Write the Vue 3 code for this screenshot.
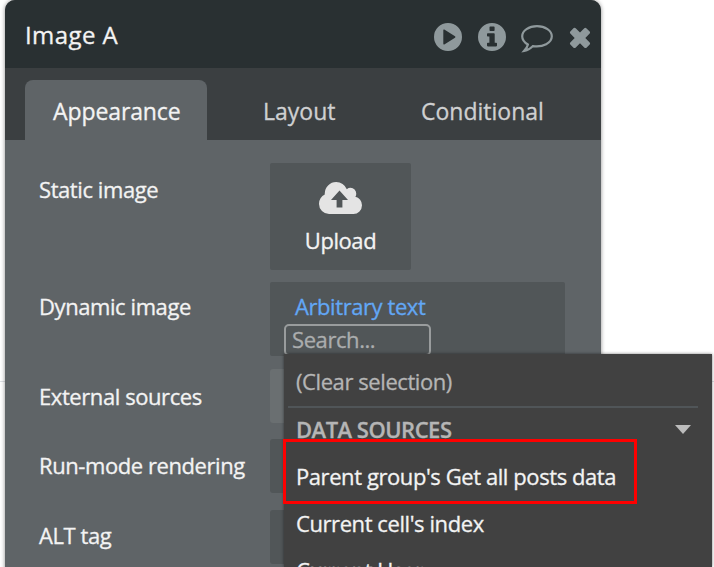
<script setup>
const tabs = [
  { name: 'Appearance', key: 'appearance', active: true },
  { name: 'Layout', key: 'layout' },
  { name: 'Conditional', key: 'conditional' }
]
const fields = [
  { label: 'External sources', key: 'external' },
  { label: 'Run-mode rendering', key: 'rendering' },
  { label: 'ALT tag', key: 'alt' }
]
</script>

<template>
  <main class="canvas">
    <section class="panel">
      <header class="title-bar">
        <h1>Image A</h1>
        <div class="actions">
          <svg class="play" viewBox="0 0 28 28"><path fill-rule="evenodd" d="M14 0a14 14 0 1 0 0 28a14 14 0 0 0 0-28ZM9.3 7.2q0-1.1 1-.6L21 13.2q1 .8 0 1.6L10.3 21.4q-1 .4-1-.6Z" /></svg>
          <svg class="info" viewBox="0 0 28 28"><path fill-rule="evenodd" d="M14 0a14 14 0 1 0 0 28a14 14 0 0 0 0-28ZM11.500 4.200q0-.8.8-.8h3.500q.8 0 .8.8v3q0 .8-.8.8h-3.500q-.8 0-.8-.8ZM9.800 10.200h6.100q.8 0 .8.8v8.800h1.500q.8 0 .8.8v2q0 .8-.8.8h-8.400q-.8 0-.8-.8v-2q0-.8.8-.8h1.600v-6.300H9.800q-.8 0-.8-.8V11q0-.8.8-.8Z" /></svg>
          <svg class="comment" viewBox="0 0 32 28"><path d="M16 1.200C7.800 1.200 1.200 5.600 1.200 11.300c0 3.500 2.200 6.300 5.700 8.200c-.4 2.600-1.900 4.300-3.700 6.300c3.500-.6 6.300-2 8.600-4.700c10.300 1.500 19-3.200 19-9.800C30.800 5.600 24.200 1.200 16 1.200Z" /></svg>
          <svg class="close" viewBox="0 0 22 22"><path d="M4.700 1Q5.700 .2 6.700 1.200L11 5.500L15.300 1.200Q16.300 .2 17.300 1.200L20.700 4.600Q21.500 5.500 20.700 6.400L16.300 11L20.700 15.500Q21.600 16.500 20.700 17.500L17.500 20.700Q16.500 21.500 15.500 20.700L11 16.300L6.500 20.700Q5.500 21.500 4.500 20.700L1.300 17.500Q.4 16.500 1.300 15.500L5.700 11L1.300 6.500Q.4 5.500 1.300 4.500Z" /></svg>
        </div>
      </header>
      <nav class="tabs">
        <div v-for="t in tabs" :key="t.key" class="tab" :class="[t.key, { active: t.active }]"><span>{{ t.name }}</span></div>
      </nav>
      <div class="form">
        <div class="row static">
          <label>Static image</label>
          <button class="upload">
            <svg viewBox="0 0 43 32">
              <g transform="translate(1.433 -2.909) scale(.022396 .022727)"><path class="cloud" d="M1856 1152q0 159-112.500 271.500t-271.500 112.500h-1088q-185 0-316.500-131.500t-131.500-316.500q0-130 70-240t188-165q-2-30-2-43 0-212 150-362t362-150q156 0 285.500 87t188.500 231q71-62 166-62 106 0 181 75t75 181q0 76-41 138 130 31 213.500 135.500t83.500 238.500z" /></g>
              <path class="arrow" d="M20.500 8.500L29 18h-5.600v7.500h-5.800V18H12Z" />
            </svg>
            <span>Upload</span>
          </button>
        </div>
        <div class="row dynamic">
          <label>Dynamic image</label>
          <div class="expression">
            <span class="expr-text">Arbitrary text</span>
            <div class="search"><span>Search...</span></div>
          </div>
        </div>
        <div v-for="f in fields" :key="f.key" class="row plain" :class="f.key">
          <label>{{ f.label }}</label>
          <div class="input"></div>
        </div>
      </div>
    </section>

    <aside class="menu">
      <div class="clear"><span>(Clear selection)</span></div>
      <div class="group"><span>DATA SOURCES</span><svg viewBox="0 0 16 9"><path d="M0 0H16L8 9Z" /></svg></div>
      <div class="option parent"><span>Parent group's Get all posts data</span></div>
      <div class="option cell"><span>Current cell's index</span></div>
      <div class="option user"><span>Current User</span></div>
    </aside>
    <div class="highlight"></div>
  </main>
</template>

<style>
body { margin: 0; background: #fff; overflow: hidden; }
</style>

<style scoped>
* { box-sizing: border-box; }
.canvas {
  position: relative;
  width: 714px;
  height: 567px;
  padding-left: 5px;
  overflow: hidden;
  font-family: "Open Sans", sans-serif;
  font-size: 22px;
  line-height: 30px;
  letter-spacing: -.42px;
  -webkit-text-stroke: .3px;
  color: #f3f3f3;
  white-space: nowrap;
  background: linear-gradient(#dfe1e5, #dfe1e5) 0 381px / 100% 1px no-repeat #fff;
}
.panel {
  width: 596px;
  height: 580px;
  overflow: hidden;
  border-radius: 10px 10px 0 0;
  background: #5f6467;
  box-shadow: 0 0 4px rgba(0, 0, 0, .45);
}
.title-bar {
  display: flex;
  justify-content: space-between;
  height: 68px;
  padding: 19px 10px 0 20px;
  background: #293032;
}
h1 { margin: 0; font-size: 24px; font-weight: 400; line-height: 32px; letter-spacing: .4px; }
.actions { display: flex; align-items: flex-start; fill: #8f999c; }
.play, .info { width: 28px; height: 28px; margin: 4px 16px 0 0; }
.play { margin-right: 16px; }
.info { margin-right: 15px; }
.comment { width: 32px; height: 28px; margin: 6px 16px 0 0; fill: none; stroke: #8f999c; stroke-width: 2.2; }
.close { width: 22px; height: 22px; margin-top: 8px; }
.tabs { display: flex; align-items: flex-end; height: 72px; padding-left: 20px; background: #3b3f41; color: #cfd0d1; font-size: 23px; letter-spacing: 0; }
.tab { height: 60px; padding-top: 16px; }
.appearance { width: 182px; padding-left: 28px; border-radius: 8px 8px 0 0; letter-spacing: -.1px; }
.active { background: #5f6467; color: #f3f3f3; }
.layout { padding-left: 56px; width: 214px; }
.form { padding: 23px 36px 0 34px; }
.row { display: grid; grid-template-columns: 231px 1fr; }
.static { height: 119px; }
.static label { padding-top: 11px; }
.upload {
  display: flex;
  flex-direction: column;
  align-items: center;
  width: 141px;
  height: 107px;
  padding: 19px 0 0;
  border: 0;
  border-radius: 2px;
  background: #515658;
  color: #f3f3f3;
  font: inherit;
  letter-spacing: inherit;
}
.upload svg { width: 43px; height: 32px; margin-bottom: 11px; }
.cloud { fill: #e4e4e4; }
.arrow { fill: #515658; }
.dynamic { height: 87px; }
.dynamic label { padding-top: 9px; }
.expression { height: 74px; padding: 9px 0 0 14px; background: #515658; border-radius: 2px; }
.expr-text { display: block; height: 33px; padding-left: 11px; color: #62a7f5; }
.search { width: 147px; height: 32px; padding-left: 6px; line-height: 26px; border: 2px solid #999c9d; border-radius: 5px; color: #abadae; }
.plain { height: 70px; }
.plain label { padding-top: 12px; }
.plain.rendering label, .plain.alt label { padding-top: 11px; }
.input { height: 54px; background: #515658; border-radius: 3px; }
.external .input { background: #6a6f71; }
.alt .input { margin-top: 1px; }
.menu {
  position: absolute;
  left: 284px;
  top: 354px;
  width: 428px;
  height: 213px;
  overflow: hidden;
  padding: 0 14px 0 4px;
  background: #414141;
  box-shadow: 0 0 3px rgba(0, 0, 0, .5);
}
.clear { height: 54px; padding: 12px 0 0 8px; border-bottom: 2px solid #505558; color: #b5b5b5; }
.group { display: flex; justify-content: space-between; height: 45px; padding: 6px 7px 0 8px; color: #b5b5b5; font-weight: 600; letter-spacing: -.5px; }
.group svg { width: 16px; height: 9px; margin-top: 11px; fill: #bcbcbc; }
.option { height: 47px; padding: 8px 0 0 8px; }
.highlight { position: absolute; left: 283px; top: 439px; width: 354px; height: 65px; border: 3px solid #fe0000; }
</style>
